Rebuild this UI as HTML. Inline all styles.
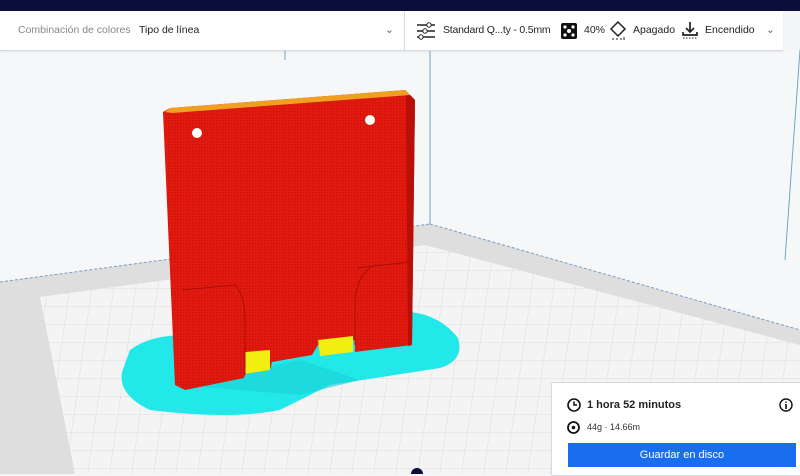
<!DOCTYPE html>
<html><head><meta charset="utf-8"><style>
body{margin:0;width:800px;height:474px;overflow:hidden;font-family:"Liberation Sans",sans-serif;background:#f4f5f7;position:relative}
.top{position:absolute;left:0;top:0;width:800px;height:11px;background:#0b0e38}
.hdr{position:absolute;top:11px;left:0;width:783px;height:39px;background:#fff;border-bottom:1px solid #d6d9de;box-shadow:0 1px 2px rgba(0,0,0,.08);font-size:10.5px;color:#222}
.hdr span{position:absolute;top:13px;white-space:nowrap}
.card{position:absolute;left:551px;top:382px;width:249px;height:92px;background:#fff;border:1px solid #d6d9de;border-radius:2px}
.btn{position:absolute;left:16px;top:60px;width:228px;height:24px;background:#196ef0;color:#fff;font-size:11px;text-align:center;line-height:24px}
</style></head><body>
<svg width="800" height="474" style="position:absolute;left:0;top:0">
<defs>
<pattern id="g" width="22" height="18" patternUnits="userSpaceOnUse" patternTransform="skewX(-8)">
<rect width="22" height="18" fill="#f4f4f4"/><path d="M0 0H22M0 0V18" stroke="#dcdcdc" stroke-width="1"/></pattern>
<pattern id="r" width="3" height="3" patternUnits="userSpaceOnUse"><rect width="3" height="3" fill="#e31a0f"/><rect width="1.5" height="1.5" fill="#cc1309"/></pattern>
</defs>
<rect x="0" y="50" width="800" height="424" fill="#f6f7f9"/>
<polygon points="0,282 430,224 800,330 800,474 0,474" fill="#dedede"/>
<polygon points="40,297 425,245 800,345 800,474 75,474" fill="url(#g)"/>
<line x1="0" y1="282" x2="430" y2="224" stroke="#7a9cc4" stroke-dasharray="3,2"/>
<line x1="430" y1="224" x2="800" y2="330" stroke="#7a9cc4" stroke-dasharray="3,2"/>
<line x1="430" y1="50" x2="430" y2="224" stroke="#6fa7c8"/>
<line x1="285" y1="50" x2="285" y2="60" stroke="#6fa7c8"/>
<line x1="800" y1="50" x2="785" y2="260" stroke="#6fa7c8"/>
<path d="M130 350 Q150 335 185 335 L410 312 Q440 315 458 338 Q465 360 440 368 L330 385 Q300 400 280 410 Q230 420 150 410 Q118 395 122 372 Z" fill="#22e8ea"/>
<path d="M180 385 L300 360 L360 380 L300 395 Z" fill="#19d0d4" opacity=".6"/>
<polygon points="163,112 170,108 405,90 415,100 412,345 355,352 355,340 318,345 312,355 272,362 270,370 245,374 244,378 185,390 175,385" fill="url(#r)"/>
<polygon points="405,90 415,100 412,345 408,346 406,98" fill="#b80f06"/>
<polygon points="165,112 170,108 405,90 410,95 172,113" fill="#f0a020"/>
<polygon points="245,352 270,350 270,370 245,374" fill="#f3ee12"/>
<polygon points="318,340 353,336 353,352 320,356" fill="#f3ee12"/>
<path d="M182 290 L235 285 Q245 295 245 320 L245 375" stroke="#a80e06" fill="none"/>
<path d="M357 268 L410 262 M370 268 Q357 278 355 300 L355 345" stroke="#a80e06" fill="none"/>
<circle cx="197" cy="133" r="5" fill="#fff"/>
<circle cx="370" cy="120" r="5" fill="#fff"/>
<circle cx="417" cy="474" r="6" fill="#0b0e38"/>
</svg>
<div class="top"></div>
<div class="hdr">
<span style="left:18px;color:#888">Combinación de colores</span>
<span style="left:139px">Tipo de línea</span>
<span style="left:385px;color:#666">&#8964;</span>
<div style="position:absolute;left:404px;top:0;width:1px;height:39px;background:#d6d9de"></div>
<svg style="position:absolute;left:416px;top:10px" width="20" height="20"><path d="M1 4H19M1 10H19M1 16H19" stroke="#222" stroke-width="1.5"/><circle cx="13" cy="4" r="2.2" fill="#fff" stroke="#222"/><circle cx="9" cy="10" r="2.2" fill="#fff" stroke="#222"/><circle cx="5" cy="16" r="2.2" fill="#fff" stroke="#222"/></svg>
<span style="left:443px;letter-spacing:-0.2px">Standard Q...ty - 0.5mm</span>
<svg style="position:absolute;left:561px;top:12px" width="16" height="16"><rect width="16" height="16" rx="2" fill="#111"/><circle cx="8" cy="8" r="2" fill="#fff"/><circle cx="4" cy="4" r="1.6" fill="#fff"/><circle cx="12" cy="4" r="1.6" fill="#fff"/><circle cx="4" cy="12" r="1.6" fill="#fff"/><circle cx="12" cy="12" r="1.6" fill="#fff"/></svg>
<span style="left:584px">40%</span>
<svg style="position:absolute;left:609px;top:10px" width="18" height="20"><path d="M9 1L16 8L9 15L2 8Z" fill="none" stroke="#222" stroke-width="1.5"/><path d="M3 18h2M7 18h2M11 18h2M15 16v3" stroke="#222"/></svg>
<span style="left:633px">Apagado</span>
<svg style="position:absolute;left:681px;top:9px" width="18" height="20"><path d="M9 2V12M5 8L9 12L13 8M2 12V15H16V12" fill="none" stroke="#222" stroke-width="1.7"/><path d="M2 18h14" stroke="#222" stroke-dasharray="1.5,1.5"/></svg>
<span style="left:705px">Encendido</span>
<span style="left:766px;color:#666">&#8964;</span>
</div>
<div class="card">
<svg style="position:absolute;left:15px;top:15px" width="14" height="14"><circle cx="7" cy="7" r="6" fill="none" stroke="#111" stroke-width="1.6"/><path d="M7 3.5V7H10" fill="none" stroke="#111" stroke-width="1.5"/></svg>
<span style="position:absolute;left:35px;top:16px;font-size:11px;font-weight:bold;color:#222">1 hora 52 minutos</span>
<svg style="position:absolute;left:227px;top:15px" width="14" height="14"><circle cx="7" cy="7" r="6" fill="none" stroke="#111" stroke-width="1.4"/><path d="M7 6V11M7 3.5V4.8" stroke="#111" stroke-width="1.6"/></svg>
<svg style="position:absolute;left:15px;top:38px" width="13" height="13"><circle cx="6.5" cy="6.5" r="5.5" fill="none" stroke="#111" stroke-width="1.8"/><circle cx="6.5" cy="6.5" r="1.8" fill="#111"/></svg>
<span style="position:absolute;left:35px;top:39px;font-size:9px;color:#333">44g · 14.66m</span>
<div class="btn">Guardar en disco</div>
</div>
</body></html>
